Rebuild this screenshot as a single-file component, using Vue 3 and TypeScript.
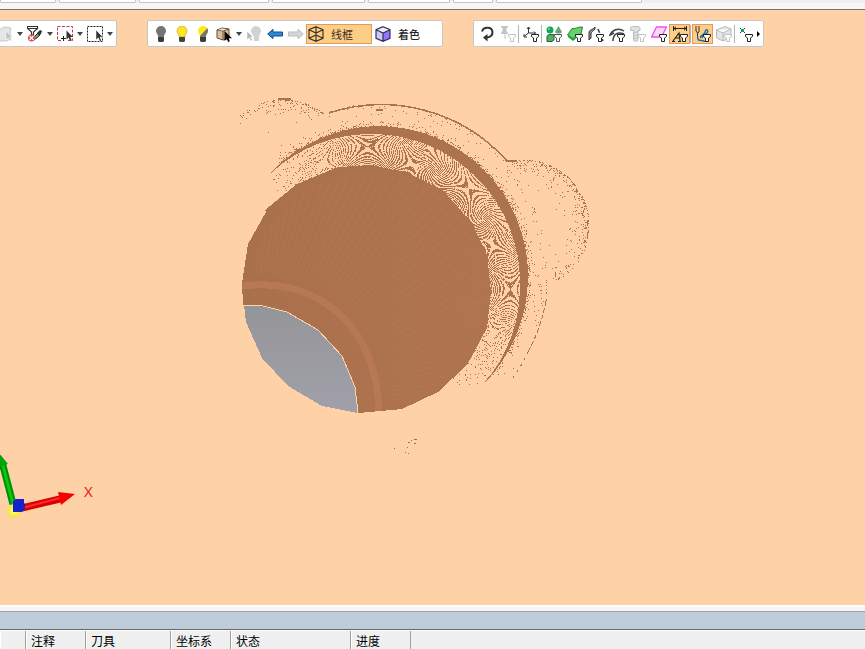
<script setup lang="ts">
interface Tool {
  icon: string
  label: string
  kind?: 'tool' | 'sep' | 'caret' | 'more'
  active?: boolean
}

const tabs: number[] = [56, 77, 130, 93, 82, 40, 146]

const selectionTools: Tool[] = [
  { icon: 'page', label: '选择' },
  { icon: 'caret', label: '选择选项', kind: 'caret' },
  { icon: 'filter-brush', label: '过滤' },
  { icon: 'caret', label: '过滤选项', kind: 'caret' },
  { icon: 'pick-add', label: '添加选择' },
  { icon: 'caret', label: '添加选项', kind: 'caret' },
  { icon: 'pick-box', label: '框选' },
  { icon: 'caret', label: '框选选项', kind: 'caret' },
]

const viewTools: Tool[] = [
  { icon: 'bulb-off', label: '隐藏' },
  { icon: 'bulb-on', label: '显示' },
  { icon: 'bulb-half', label: '切换' },
  { icon: 'crate', label: '实体' },
  { icon: 'caret', label: '实体选项', kind: 'caret' },
  { icon: 'bulb-pick', label: '拾取' },
  { icon: 'back', label: '后退' },
  { icon: 'forward', label: '前进' },
]

const filterTools: Tool[] = [
  { icon: 'redo', label: '重做' },
  { icon: 'pin', label: '固定' },
  { icon: '', label: '', kind: 'sep' },
  { icon: 'axis', label: '坐标过滤' },
  { icon: '', label: '', kind: 'sep' },
  { icon: 'solids', label: '实体过滤' },
  { icon: 'surface', label: '曲面过滤' },
  { icon: 'edges', label: '边过滤' },
  { icon: 'curves', label: '曲线过滤' },
  { icon: 'bolt', label: '孔过滤' },
  { icon: 'plane', label: '平面过滤' },
  { icon: 'text', label: '标注过滤', active: true },
  { icon: '', label: '', kind: 'sep' },
  { icon: 'path', label: '刀路过滤', active: true },
  { icon: 'block', label: '毛坯过滤' },
  { icon: '', label: '', kind: 'sep' },
  { icon: 'point', label: '点过滤' },
  { icon: 'more', label: '更多', kind: 'more' },
]

const columns: { title: string; width: number }[] = [
  { title: '', width: 26 },
  { title: '注释', width: 60 },
  { title: '刀具', width: 85 },
  { title: '坐标系', width: 60 },
  { title: '状态', width: 120 },
  { title: '进度', width: 60 },
]

// Repeatable noise in 0..1 for a pixel position.
function noise(x: number, y: number): number {
  const v = Math.sin(x * 127.1 + y * 311.7) * 43758.5453
  return v - Math.floor(v)
}

function dist(x: number, y: number, cx: number, cy: number): number {
  return Math.hypot(x - cx, y - cy)
}

// Angle away from the upper-right direction, 0..PI.
function spread(x: number, y: number): number {
  const a = Math.abs(Math.atan2(y - 277, x - 378) + Math.PI / 4)
  return a > Math.PI ? 2 * Math.PI - a : a
}

// Interference of the facet grid between the inner disc and the rim:
// saddle-shaped fringes centred on every eighth of the turn.
function interference(): string {
  let d = ''
  const step = Math.PI / 4
  for (let y = 126; y < 385; y++) {
    for (let x = 262; x < 535; x++) {
      const r = dist(x, y, 367, 289)
      if (r < 119 || dist(x, y, 372, 282) > 148) continue
      const a = spread(x, y)
      if (a > 1.72) continue
      const fade = a < 0.9 ? 1 : Math.max(0.1, 1 - (a - 0.9) * 1.2)
      const depth = Math.max(0, Math.min(1, (r - 121) / 34))
      const theta = Math.atan2(y - 289, x - 367)
      const along = (theta - Math.round(theta / step) * step) * 143
      const across = r - 143
      const phase = (along * along) / 115 - (across * across) / 62
      const level = (0.58 - depth * 0.24) * (0.45 + fade * 0.55)
      if (phase - Math.floor(phase) < level && noise(x, y) < fade * 0.92) d += `M${x} ${y}h1v1h-1z`
    }
  }
  return d
}

// Loose points around the rim, the outer edge and both lobes.
function stipple(): string {
  let d = ''
  for (let y = 96; y < 385; y++) {
    for (let x = 240; x < 592; x++) {
      const n = noise(x, y)
      const a = spread(x, y)
      const rim = dist(x, y, 378, 276) - 150
      const edge = 169 - dist(x, y, 378, 272)
      let p = 0
      if (rim > 0 && a < 1.5) p = 0.34 * Math.exp(-rim / 2.6)
      if (edge > 0 && edge < 12 && a < 1.1) p = Math.max(p, 0.07 * Math.exp(-edge / 5))
      const right = 66 - dist(x, y, 523, 225)
      if (right > 0 && edge < -3 && y < 280 && y > 159) p = 0.4 * Math.exp(-right / 6) * (y > 245 ? 0.5 : 1)
      const left = 66 - dist(x, y, 283, 165)
      if (left > 0 && x < 329 && y < 133 && edge < 2) p = 0.36 * Math.exp(-left / 5) * (x < 262 ? 0.4 : 1)
      if (n < p) d += `M${x} ${y}h1v1h-1z`
    }
  }
  return d
}

// Faint diagonal aliasing of the shaded face.
function grain(): string {
  let d = ''
  for (let y = 170; y < 406; y++) {
    for (let x = 250; x < 485; x++) {
      if (dist(x, y, 367, 289) > 117 || dist(x, y, 262, 400) < 126) continue
      const phase = Math.atan2(413 - y, x - 242) * 34
      if (phase - Math.floor(phase) < 0.3 && (x + y * 2) % 4 < 2) d += `M${x} ${y}h1v1h-1z`
    }
  }
  return d
}

const interferencePath = interference()
const stipplePath = stipple()
const grainPath = grain()
</script>

<template>
  <svg class="symbols" aria-hidden="true">
    <symbol id="funnel" viewBox="0 0 16 16">
      <path d="M8.500 8.500h7v2l-2 1.500v3.500h-3v-3.500l-2-1.500z" fill="#fff" stroke="currentColor" />
    </symbol>
    <symbol id="bulb" viewBox="0 0 16 16">
      <path d="M8 0a5 5 0 0 0-5 5c0 2 2 3.500 2.300 6h5.400C11 8.500 13 7 13 5a5 5 0 0 0-5-5z" />
    </symbol>
    <symbol id="i-page" viewBox="0 0 16 16">
      <path d="M0 4l4-1 3-2 7 1-1 4 1 7-5 2H0z" fill="#e6e6e6" stroke="#c8c8c8" />
      <path d="M9 5v9l2-2 2 3 1.500-1-2-3h3z" fill="#c2c2c2" stroke="#fff" stroke-width=".5" />
    </symbol>
    <symbol id="i-filter-brush" viewBox="0 0 16 16">
      <path d="M.5 .5h10v2l-4 3.500v3h-2V6l-4-3.500zM1 2.500h9" fill="#fff" stroke="#333" stroke-width="1.200" />
      <path d="M6 14l2-4 3-3 2 2-3 3z" fill="#67a56b" stroke="#333" />
      <path d="M10 7l3-3 2 1-1 3-2 2z" fill="#333" />
      <circle cx="4.500" cy="12" r="3.500" fill="#d94949" />
      <path d="M2.500 10l4 4m0-4l-4 4" stroke="#fff" stroke-width="1.200" />
    </symbol>
    <symbol id="i-pick-add" viewBox="0 0 16 16">
      <path d="M.5 .5h15v14H.5z" fill="none" stroke="#c63636" stroke-dasharray="3 1.500" />
      <path d="M4 9h7v7H4z" fill="#fff" />
      <path d="M6.500 10v5M4 12.500h5" stroke="#222" />
      <path d="M9.500 4.500v9l2-2 1.700 3.500 1.500-.8-1.500-3.200h2.700z" fill="#333" />
    </symbol>
    <symbol id="i-pick-box" viewBox="0 0 16 16">
      <path d="M.5 .5h15v15H.5z" fill="none" stroke="#222" stroke-dasharray="2 1" />
      <path d="M9 4v10l2.200-2.200 1.800 3.700 1.600-.8-1.600-3.500H16z" fill="#333" stroke="#fff" stroke-width=".5" />
    </symbol>
    <symbol id="i-bulb-off" viewBox="0 0 16 16">
      <use href="#bulb" fill="#747474" /><path d="M5 11h6v4l-1 1H6l-1-1z" fill="#3d3d3d" />
    </symbol>
    <symbol id="i-bulb-on" viewBox="0 0 16 16">
      <use href="#bulb" fill="#ffe71c" stroke="#a9a05a" stroke-width=".6" /><path d="M5 11h6v4l-1 1H6l-1-1z" fill="#444" />
    </symbol>
    <symbol id="i-bulb-half" viewBox="0 0 16 16">
      <use href="#bulb" fill="#ffe71c" /><path d="M12.500 2L5 10v1h5.700c.3-2.500 2.300-4 2.300-6 0-1-.2-2-.5-3z" fill="#747474" />
      <path d="M5 11h6v4l-1 1H6l-1-1z" fill="#3d3d3d" />
    </symbol>
    <symbol id="i-crate" viewBox="0 0 16 16">
      <path d="M1 4l5-2 7 1v9l-6 2-6-2z" fill="#e0bb98" stroke="#5d5148" />
      <path d="M1 4l6 1 6-2M7 5v9" fill="none" stroke="#5d5148" />
      <path d="M2 4l4-1.500 5 .8-4 1.200z" fill="#f5e2c9" />
      <path d="M8.500 5v10l2.200-2 1.500 3 1.600-.8-1.200-3H16z" fill="#000" />
    </symbol>
    <symbol id="i-bulb-pick" viewBox="0 0 16 16">
      <path d="M10 0a5 5 0 0 0-4 8l2 3v4h5v-4l1-3a5 5 0 0 0-4-8z" fill="#d2d2d2" />
      <path d="M1 5v9l2-2 2 3 1.500-1-2-3h2.500z" fill="#b7b7b7" stroke="#fff" stroke-width=".6" />
    </symbol>
    <symbol id="i-back" viewBox="0 0 16 16">
      <path d="M.7 8L6 3.300V6h9.500v4H6v2.700z" fill="#2e86d8" stroke="#174e80" />
    </symbol>
    <symbol id="i-forward" viewBox="0 0 16 16">
      <path d="M15.300 8L10 3.300V6H.5v4H10v2.700z" fill="#d6d6d6" stroke="#bdbdbd" />
    </symbol>
    <symbol id="i-wire" viewBox="0 0 16 16">
      <path d="M8 .7l7 3v8.600l-7 3-7-3V3.700zM1 3.700l7 3.300 7-3.300M8 .7v14.600M1 12.300L8 9l7 3.300" fill="none" stroke="#3d3428" stroke-width="1.200" />
    </symbol>
    <symbol id="i-shaded" viewBox="0 0 16 16">
      <path d="M1 3.700l7 3.300v8.300l-7-3z" fill="#cfc6ff" />
      <path d="M8 7l7-3.300v8.600l-7 3z" fill="#8f78ff" />
      <path d="M1 3.700l7-3 7 3L8 7z" fill="#eeeaff" />
      <path d="M8 .7l7 3v8.600l-7 3-7-3V3.700zM1 3.700l7 3.300 7-3.300M8 7v8" fill="none" stroke="#33334a" stroke-width="1.200" />
    </symbol>
    <symbol id="i-redo" viewBox="0 0 16 16">
      <path d="M3 5.500C4.500.5 13 .5 13.500 6c.2 3.500-2.500 5.500-6 5.500" fill="none" stroke="#333" stroke-width="2" />
      <path d="M8.500 8v7.500L4 11.500z" fill="#333" />
    </symbol>
    <symbol id="i-pin" viewBox="0 0 16 16">
      <path d="M1 0h7v1.500L6.500 2v3L8 7v1H5.500v5h-1V8H1V7l1.500-2V2L1 1.500z" fill="#c5c5c5" />
      <use href="#funnel" color="#c2c2c2" />
    </symbol>
    <symbol id="i-axis" viewBox="0 0 16 16">
      <path d="M5.500 1.500V7L1 10.500M5.500 7h7M4 3l1.500-2L7 3M11 5.500L12.500 7 11 8.500M1 8v3h3" fill="none" stroke="#333" />
      <use href="#funnel" color="#222" />
    </symbol>
    <symbol id="i-solids" viewBox="0 0 16 16">
      <circle cx="4" cy="4" r="3.500" fill="#12a953" /><circle cx="3" cy="3" r="1" fill="#80d6a3" />
      <path d="M12.500 0l3.500 6c-1 2-6 2-7 0z" fill="#62a875" />
      <path d="M1 10l2-1.500h5V14l-2 1.500H1z" fill="#54ae64" stroke="#28643b" />
      <use href="#funnel" color="#555" />
    </symbol>
    <symbol id="i-surface" viewBox="0 0 16 16">
      <path d="M.6 9L5 2.500c3 1 6-2 10.500-1.500L14 8c-4 0-6 3-8 4.500z" fill="#66d26c" stroke="#267d39" />
      <path d="M.6 9L6 12.500c2-1.500 4-4.500 8-4.500v2c-4 0-5 3-8 5L1 11z" fill="#299d42" />
      <use href="#funnel" color="#222" />
    </symbol>
    <symbol id="i-edges" viewBox="0 0 16 16">
      <path d="M1 14V6c1-3 4-2 6-5v2C5 6 3 5 3 8v4z" fill="#999" stroke="#333" />
      <path d="M10 3l5 12" fill="none" stroke="#333" stroke-width="1.500" stroke-dasharray="4 1.500" />
      <use href="#funnel" color="#222" />
    </symbol>
    <symbol id="i-curves" viewBox="0 0 16 16">
      <path d="M.5 10C3 4 9 1 15 5M4 15C4 9 8 5 15 8M1 9l4-2" fill="none" stroke="#444" stroke-width="1.500" />
      <use href="#funnel" color="#222" />
    </symbol>
    <symbol id="i-bolt" viewBox="0 0 16 16">
      <path d="M.5 1.500l2-1h6l1.500 1v3H8v10l-2.500 1-2-1v-10h-3zM3.500 7L8 5.500M3.500 10L8 8.500M3.500 13L8 11.500" fill="#e2e2e2" stroke="#bdbdbd" />
      <use href="#funnel" color="#c2c2c2" />
    </symbol>
    <symbol id="i-plane" viewBox="0 0 16 16">
      <path d="M5.500 1h10L10.500 11H.5z" fill="#f7d7f8" stroke="#ef52ed" stroke-width="1.300" />
      <use href="#funnel" color="#222" />
    </symbol>
    <symbol id="i-text" viewBox="0 0 16 16">
      <path d="M1.500 0v5M14.500 0v5M2 2.500h12M4 .8L2 2.500 4 4.200M12 .8l2 1.700-2 1.700" fill="none" stroke="#222" />
      <path d="M0 15.500h3M1 15l6-8 1 8M3 12h5M6 15.500h3" fill="none" stroke="#222" stroke-width="1.200" />
      <use href="#funnel" color="#222" />
    </symbol>
    <symbol id="i-path" viewBox="0 0 16 16">
      <path d="M1 0v5l1.500 2v3M4 0v6l-1.500 1" fill="none" stroke="#333" />
      <path d="M2.500 10c0 7 4 3 7 5.500h4M6 12c-2-3 3-2 4-6s4-2 2 1c-2 2-4 2-5 5" fill="none" stroke="#236aa0" stroke-width="1.400" />
      <use href="#funnel" color="#222" />
    </symbol>
    <symbol id="i-block" viewBox="0 0 16 16">
      <path d="M.5 4L9 .5 15 3v8l-8 4-6.500-3zM.5 4L7 7l8-4M7 7v8" fill="#e5e5e5" stroke="#b9b9b9" />
      <use href="#funnel" color="#c2c2c2" />
    </symbol>
    <symbol id="i-point" viewBox="0 0 16 16">
      <path d="M1 2l5 5M6 2L1 7" stroke="#333" /><path d="M2 3h3v3H2z" fill="#16a04d" />
      <svg x="-2" y="0" width="16" height="16"><use href="#funnel" color="#222" /></svg>
    </symbol>
  </svg>

  <div class="app">
    <div class="tabs"><span v-for="(w, i) in tabs" :key="i" class="tab" :style="{ width: w + 'px' }"></span></div>

    <main class="viewport">
      <svg class="scene" role="img" aria-label="模型">
        <defs>
          <linearGradient id="floor" x1="0" y1="0" x2="0" y2="1">
            <stop offset="0" stop-color="#949598" /><stop offset="1" stop-color="#a1a0aa" />
          </linearGradient>
          <linearGradient id="face" x1="0" y1="0" x2="1" y2="0">
            <stop offset="0" stop-color="#a9704c" /><stop offset="1" stop-color="#b0754f" />
          </linearGradient>
          <radialGradient id="ball"><stop offset="0" stop-color="#ffff9a" /><stop offset="1" stop-color="#f1e820" /></radialGradient>
        </defs>
        <g transform="translate(0 -10)">
          <g shape-rendering="crispEdges">
            <path :d="interferencePath" fill="#ac734e" />
            <path :d="stipplePath" fill="#ac734e" />
            <path d="M271 173A150 150 0 0 1 378 126A150 150 0 0 1 528 276A150 150 0 0 1 485 382A148 148 0 0 0 520 282A148 148 0 0 0 372 134A148 148 0 0 0 271 173z" fill="#ac734e" />
            <path d="M271 173A150 150 0 0 1 300 149M485 382A150 150 0 0 0 506 354" fill="none" stroke="#ac734e" />
            <path d="M329 113A168 168 0 0 1 507 161h10" fill="none" stroke="#ac734e" stroke-width="1.500" />
            <path d="M546 301A169 169 0 0 1 528 352" fill="none" stroke="#ac734e" stroke-dasharray="5 2" />
            <path d="M528 352A169 169 0 0 1 510 382M546 301v-12" fill="none" stroke="#ac734e" stroke-dasharray="2 5" />
            <path d="M278 99h13M362 139q8 6 16 0M376 110h7" fill="none" stroke="#ac734e" stroke-width="2" />
            <path d="M242 283L248 244L266 212L265 210L297 184L333 169L338 167L372 165L410 174L446 192L448 196L473 225L487 255L488 263L491 292L487 328L467 365L438 392L402 409L358 413L355 387L342 356L318 330L287 312L259 306L243 305z" fill="url(#face)" />
            <path :d="grainPath" fill="#b67c54" opacity=".5" />
            <path d="M242 286C322 276 377 330 379 411" fill="none" stroke="#b67953" stroke-width="7" />
            <path d="M244 305L259 306L287 312L318 330L342 356L355 387L358 413L322 406L288 386L262 358L246 322z" fill="url(#floor)" />
            <path d="M244 305H259L287 312L318 330L342 356L355 387L358 413" fill="none" stroke="#f8d2ac" />
            <path d="M394 448h1M405 452h1M407 447h1M408 453h1M408 442h2M411 440h1M414 439h3M414 443h2" stroke="#9c6d4d" />
          </g>
          <path d="M13 504L2 462" stroke="#008d06" stroke-width="7" /><path d="M13 504L2 462" stroke="#0ac60e" stroke-width="3" />
          <path d="M-1 453L8 464L-8 469z" fill="#00a50a" />
          <circle cx="14" cy="511" r="6.500" fill="url(#ball)" />
          <path d="M22 508L60 499" stroke="#d90000" stroke-width="7" /><path d="M22 508L60 498" stroke="#ff2929" stroke-width="2" />
          <path d="M58 492L75 494L61 505z" fill="#f40000" />
          <path d="M13 501l3-2h8v4l1 1v5l-3 3h-9z" fill="#1721c9" />
          <text x="84" y="497" class="axis-label">X</text>
        </g>
      </svg>

      <div class="toolbars">
        <div class="toolbar first" role="toolbar" aria-label="选择">
          <button v-for="t in selectionTools" :key="t.label" type="button" :class="t.kind || 'tool'" :aria-label="t.label">
            <svg v-if="!t.kind" class="icon"><use :href="'#i-' + t.icon" /></svg>
          </button>
        </div>
        <div class="toolbar" role="toolbar" aria-label="视图">
          <button v-for="t in viewTools" :key="t.label" type="button" :class="t.kind || 'tool'" :aria-label="t.label">
            <svg v-if="!t.kind" class="icon"><use :href="'#i-' + t.icon" /></svg>
          </button>
          <button type="button" class="mode active"><svg class="icon"><use href="#i-wire" /></svg><span>线框</span></button>
          <button type="button" class="mode shaded"><svg class="icon"><use href="#i-shaded" /></svg><span>着色</span></button>
        </div>
        <div class="toolbar" role="toolbar" aria-label="过滤">
          <template v-for="(t, i) in filterTools" :key="i">
            <span v-if="t.kind === 'sep'" class="sep"></span>
            <button v-else type="button" :class="[t.kind || 'tool', { active: t.active }]" :aria-label="t.label">
              <svg v-if="!t.kind" class="icon"><use :href="'#i-' + t.icon" /></svg>
            </button>
          </template>
        </div>
      </div>
    </main>

    <div class="splitter"></div>
    <div class="panel-title"></div>
    <div class="list">
      <table>
        <thead>
          <tr><th v-for="(c, i) in columns" :key="i" scope="col" :style="{ width: c.width + 'px' }">{{ c.title }}</th></tr>
        </thead>
      </table>
    </div>
  </div>
</template>

<style>
body {
  margin: 0;
  overflow: hidden;
}
</style>

<style scoped>
.symbols {
  position: absolute;
  width: 0;
  height: 0;
}
.app {
  display: flex;
  flex-direction: column;
  height: 100vh;
  background: #f0f0f0;
  color: #000;
  font-family: "Liberation Sans", "Noto Sans CJK SC", sans-serif;
  font-size: 12px;
}
.tabs {
  display: flex;
  gap: 3px;
  height: 9px;
  background: linear-gradient(#efefef 3px, #f6f6f6 3px);
  border-bottom: 1px solid #737373;
}
.tab {
  box-sizing: border-box;
  flex: none;
  height: 3px;
  background: #fff;
  border: 1px solid #c3c3c3;
  border-top: 0;
  border-radius: 0 0 2px 2px;
}
.viewport {
  position: relative;
  flex: 1;
  min-height: 0;
  overflow: hidden;
  background: #ffd1a6;
}
.scene {
  position: absolute;
  inset: 0;
  width: 100%;
  height: 100%;
}
.axis-label {
  font-family: "Noto Sans", sans-serif;
  font-size: 15px;
  fill: #ee2222;
}
.toolbars {
  position: relative;
  display: flex;
  gap: 30px;
  margin: 10px 0 0 -9px;
}
.toolbar {
  box-sizing: border-box;
  display: flex;
  flex: none;
  align-items: center;
  height: 27px;
  padding: 0 3px 0 2px;
  background: #fff;
  border: 1px solid #c9c7c5;
  border-radius: 2px;
}
.toolbar.first {
  padding-right: 2px;
}
button {
  display: flex;
  align-items: center;
  justify-content: center;
  box-sizing: border-box;
  height: 20px;
  margin: 0;
  padding: 0;
  background: none;
  border: 0;
  font: inherit;
}
.tool {
  width: 21px;
}
.icon {
  display: block;
  flex: none;
  width: 16px;
  height: 16px;
}
.active {
  background: #ffce86;
  border: 1px solid #e49a5e;
}
.caret {
  width: 9px;
}
.caret::before {
  content: "";
  border: 3px solid transparent;
  border-top: 4px solid #444;
  border-bottom: 0;
}
.more {
  width: 3px;
}
.more::before {
  content: "";
  border: 3px solid transparent;
  border-left-color: #000;
  border-right: 0;
}
.sep {
  width: 1px;
  height: 18px;
  margin-right: 1px;
  background: #b3b3b3;
}
.mode {
  justify-content: flex-start;
  gap: 7px;
  width: 66px;
  padding-left: 1px;
  color: #3b3025;
  font-size: 11px;
}
.shaded {
  width: 67px;
  padding-left: 3px;
  color: #222;
  font-weight: 500;
}
.splitter {
  height: 4px;
  background: #f5f5f5;
  border-top: 2px solid #fff;
  border-bottom: 1px solid #a0a0a0;
}
.panel-title {
  height: 17px;
  background: #bfccda;
  border-bottom: 1px solid #696969;
}
.list {
  height: 18px;
  overflow: hidden;
  background: #f0f0f0;
  border-top: 1px solid #fff;
}
table {
  border-collapse: separate;
  border-spacing: 0;
  table-layout: fixed;
  width: 411px;
}
th {
  box-sizing: border-box;
  height: 22px;
  padding: 0 0 0 5px;
  border-right: 1px solid #a0a0a0;
  box-shadow: inset 1px 0 #fff;
  font-weight: normal;
  line-height: 22px;
  text-align: left;
  white-space: nowrap;
}
</style>
